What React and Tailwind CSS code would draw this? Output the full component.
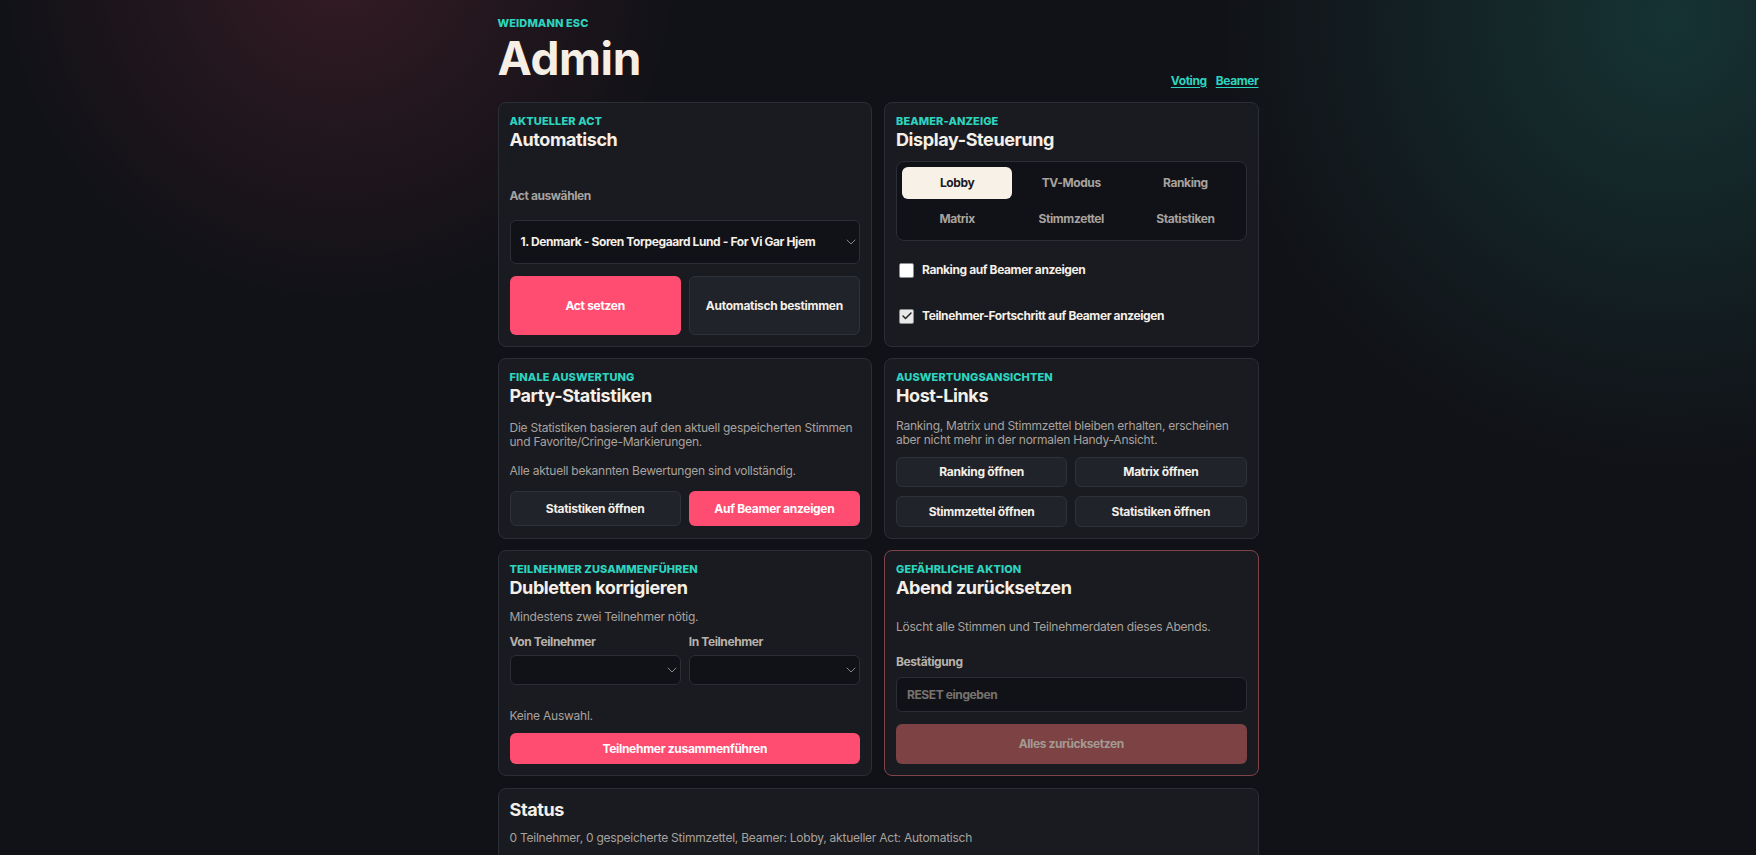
import { ChevronDown, Check } from 'lucide-react';
import clsx from 'clsx';

const Card = ({ children, danger, className }) => (
  <section
    className={clsx(
      'rounded-lg border bg-[#1a1b20] p-[11px]',
      danger ? 'border-[#80434a]' : 'border-[#2c2e36]',
      className
    )}
  >
    {children}
  </section>
);

const CardHead = ({ kicker, title }) => (
  <div>
    <p className="text-[11px] leading-[14px] font-extrabold uppercase tracking-[0.01em] text-[#2dd4bf]">{kicker}</p>
    <h2 className="text-lg leading-6 font-bold text-[#f4efe7]">{title}</h2>
  </div>
);

const Text = ({ children, className }) => (
  <p className={clsx('text-xs leading-[14px] tracking-[-0.02em] text-[#a8a29e]', className)}>{children}</p>
);

const Btn = ({ children, pink, className }) => (
  <button
    className={clsx(
      'flex items-center justify-center rounded-md text-xs font-bold tracking-[-0.025em]',
      pink ? 'bg-[#ff4d72] text-white' : 'border border-[#30323b] bg-[#21232b] text-[#f4efe7]',
      className
    )}
  >
    {children}
  </button>
);

const FakeSelect = ({ value, className }) => (
  <div
    className={clsx(
      'flex items-center rounded-md border border-[#2c2e36] bg-[#111217] pl-[10px]',
      className
    )}
  >
    <span className="text-xs font-bold text-[#f4efe7]">{value}</span>
    <ChevronDown className="ml-auto h-4 w-4 text-[#8a8580]" strokeWidth={1.5} />
  </div>
);

const Toggle = ({ label, checked }) => (
  <label className="flex h-[38px] items-center gap-2 pl-[3px]">
    <span
      className={clsx(
        'flex h-[15px] w-[15px] items-center justify-center rounded-[2px] border border-[#8d8d8d]',
        checked ? 'bg-[#e8e8e8]' : 'bg-white'
      )}
    >
      {checked && <Check className="h-3 w-3 text-[#222]" strokeWidth={3} />}
    </span>
    <span className="text-xs font-bold text-[#f4efe7]">{label}</span>
  </label>
);

const tabs = ['Lobby', 'TV-Modus', 'Ranking', 'Matrix', 'Stimmzettel', 'Statistiken'];

export default function App() {
  return (
    <div
      className="min-h-screen bg-[#111217] bg-[radial-gradient(circle_at_340px_-40px,rgba(255,77,114,0.15),transparent_340px),radial-gradient(circle_at_1670px_20px,rgba(45,212,191,0.17),transparent_450px)] pb-10 tracking-[-0.025em] text-[#f4efe7]"
      style={{ fontFamily: 'Inter, "Noto Sans", sans-serif' }}
    >
      <div className="mx-auto w-[761px]">
        {/* Header */}
        <header className="flex items-end justify-between pt-4 pb-[13px]">
          <div className="pb-[3px]">
            <p className="text-[11px] leading-[14px] font-extrabold uppercase tracking-[0.01em] text-[#2dd4bf]">Weidmann ESC</p>
            <h1 className="text-[46px] leading-[56px] font-bold text-[#f6efe6]">Admin</h1>
          </div>
          <nav className="flex gap-[9px] text-xs leading-4 font-bold text-[#2dd4bf]">
            <a className="underline underline-offset-2">Voting</a>
            <a className="underline underline-offset-2">Beamer</a>
          </nav>
        </header>

        <div className="grid grid-cols-2 gap-x-3 gap-y-[11px]">
          {/* Aktueller Act */}
          <Card>
            <CardHead kicker="Aktueller Act" title="Automatisch" />
            <p className="mt-9 text-xs leading-4 font-bold text-[#a8a29e]">Act auswählen</p>
            <FakeSelect className="mt-4 h-[44px]" value="1. Denmark - Soren Torpegaard Lund - For Vi Gar Hjem" />
            <div className="mt-3 grid grid-cols-2 gap-2">
              <Btn pink className="h-[59px]">Act setzen</Btn>
              <Btn className="h-[59px]">Automatisch bestimmen</Btn>
            </div>
          </Card>

          {/* Beamer */}
          <Card>
            <CardHead kicker="Beamer-Anzeige" title="Display-Steuerung" />
            <div className="mt-[9px] grid grid-cols-3 gap-1 rounded-lg border border-[#2c2e36] bg-[#111217] p-[5px]">
              {tabs.map((t, i) => (
                <div
                  key={t}
                  className={clsx(
                    'flex h-8 items-center justify-center rounded-md text-xs font-bold',
                    i === 0 ? 'bg-[#f7f1e8] text-[#1b1b1f]' : 'text-[#a8a29e]'
                  )}
                >
                  {t}
                </div>
              ))}
            </div>
            <div className="mt-[10px] flex flex-col gap-2">
              <Toggle label="Ranking auf Beamer anzeigen" />
              <Toggle label="Teilnehmer-Fortschritt auf Beamer anzeigen" checked />
            </div>
          </Card>

          {/* Party-Statistiken */}
          <Card>
            <CardHead kicker="Finale Auswertung" title="Party-Statistiken" />
            <Text className="mt-[13px]">
              Die Statistiken basieren auf den aktuell gespeicherten Stimmen und Favorite/Cringe-Markierungen.
            </Text>
            <Text className="mt-[15px]">Alle aktuell bekannten Bewertungen sind vollständig.</Text>
            <div className="mt-[13px] grid grid-cols-2 gap-2">
              <Btn className="h-[35px]">Statistiken öffnen</Btn>
              <Btn pink className="h-[35px]">Auf Beamer anzeigen</Btn>
            </div>
          </Card>

          {/* Host-Links */}
          <Card>
            <CardHead kicker="Auswertungsansichten" title="Host-Links" />
            <Text className="mt-[11px] pr-1">
              Ranking, Matrix und Stimmzettel bleiben erhalten, erscheinen aber nicht mehr in der normalen Handy-Ansicht.
            </Text>
            <div className="mt-[10px] grid grid-cols-2 gap-x-2 gap-y-[9px]">
              <Btn className="h-[30px]">Ranking öffnen</Btn>
              <Btn className="h-[30px]">Matrix öffnen</Btn>
              <Btn className="h-[31px]">Stimmzettel öffnen</Btn>
              <Btn className="h-[31px]">Statistiken öffnen</Btn>
            </div>
          </Card>

          {/* Dubletten */}
          <Card>
            <CardHead kicker="Teilnehmer zusammenführen" title="Dubletten korrigieren" />
            <Text className="mt-[10px]">Mindestens zwei Teilnehmer nötig.</Text>
            <div className="mt-[11px] grid grid-cols-2 gap-2">
              <div>
                <p className="text-xs leading-[14px] font-bold text-[#b8b2aa]">Von Teilnehmer</p>
                <FakeSelect className="mt-[6px] h-[30px]" value="" />
              </div>
              <div>
                <p className="text-xs leading-[14px] font-bold text-[#b8b2aa]">In Teilnehmer</p>
                <FakeSelect className="mt-[6px] h-[30px]" value="" />
              </div>
            </div>
            <Text className="mt-6">Keine Auswahl.</Text>
            <Btn pink className="mt-[10px] h-[31px] w-full">Teilnehmer zusammenführen</Btn>
          </Card>

          {/* Reset */}
          <Card danger>
            <CardHead kicker="Gefährliche Aktion" title="Abend zurücksetzen" />
            <Text className="mt-5">Löscht alle Stimmen und Teilnehmerdaten dieses Abends.</Text>
            <p className="mt-[21px] text-xs leading-[14px] font-bold text-[#b8b2aa]">Bestätigung</p>
            <div className="mt-2 flex h-[35px] items-center rounded-md border border-[#2c2e36] bg-[#111217] px-[10px]">
              <span className="text-xs font-bold text-[#77726d]">RESET eingeben</span>
            </div>
            <button className="mt-3 flex h-10 w-full items-center justify-center rounded-md bg-[#7d4243] text-xs font-bold text-[#a39a93]">
              Alles zurücksetzen
            </button>
          </Card>
        </div>

        {/* Status */}
        <Card className="mt-3 pt-[9px] pb-4">
          <h2 className="text-lg leading-6 font-bold text-[#f4efe7]">Status</h2>
          <Text className="mt-[9px]">
            0 Teilnehmer, 0 gespeicherte Stimmzettel, Beamer: Lobby, aktueller Act: Automatisch
          </Text>
        </Card>
      </div>
    </div>
  );
}
